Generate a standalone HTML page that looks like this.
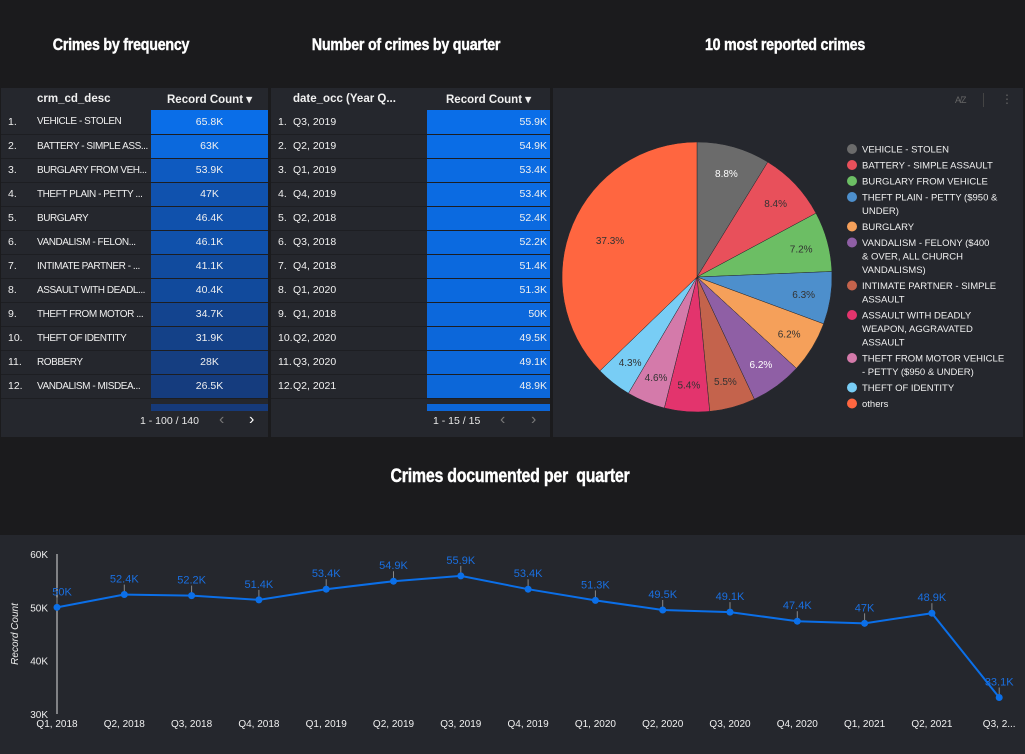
<!DOCTYPE html>
<html><head><meta charset="utf-8"><style>
*{margin:0;padding:0;box-sizing:border-box}
body{width:1025px;height:754px;background:#1b1b1d;font-family:"Liberation Sans",sans-serif;color:#e8e8e8;position:relative;overflow:hidden}
.t{position:absolute;font-weight:bold;color:#fff;font-size:17px;white-space:nowrap;transform:translateX(-50%) scaleX(0.84);letter-spacing:-0.3px;-webkit-text-stroke:0.4px #fff}
.panel{position:absolute;background:#25272d}
table{border-collapse:collapse;width:100%;font-size:10.5px;color:#f0f0f0;table-layout:fixed}
td,th{height:24px;padding:0;border-bottom:1px solid #1d1e22;white-space:nowrap;overflow:hidden}
th{height:22px;font-weight:bold;font-size:11.5px;border-bottom:none;text-align:left}
.n{padding-left:7px}
.c{text-align:center}
.r{text-align:right;padding-right:3px}
.d td:nth-child(2){font-size:10px;letter-spacing:-0.45px}
.foot{position:absolute;bottom:0;left:0;right:0;height:32px;font-size:10.5px}
</style></head><body>
<div class="t" style="left:121px;top:35px">Crimes by frequency</div>
<div class="t" style="left:406px;top:35px">Number of crimes by quarter</div>
<div class="t" style="left:785px;top:35px">10 most reported crimes</div>
<div class="t" style="left:510px;top:466px;font-size:19px">Crimes documented per&nbsp; quarter</div>

<div class="panel" style="left:1px;top:88px;width:267px;height:349px">
<table class="d">
<colgroup><col style="width:36px"><col style="width:114px"><col></colgroup>
<tr><th></th><th>crm_cd_desc</th><th class="c">Record Count ▾</th></tr>
<tr><td class="n">1.</td><td>VEHICLE - STOLEN</td><td class="c" style="background:#0a6ee8">65.8K</td></tr>
<tr><td class="n">2.</td><td>BATTERY - SIMPLE ASS...</td><td class="c" style="background:#0b69dd">63K</td></tr>
<tr><td class="n">3.</td><td>BURGLARY FROM VEH...</td><td class="c" style="background:#0e5ac0">53.9K</td></tr>
<tr><td class="n">4.</td><td>THEFT PLAIN - PETTY ...</td><td class="c" style="background:#1052ae">47K</td></tr>
<tr><td class="n">5.</td><td>BURGLARY</td><td class="c" style="background:#1051ac">46.4K</td></tr>
<tr><td class="n">6.</td><td>VANDALISM - FELON...</td><td class="c" style="background:#1051ab">46.1K</td></tr>
<tr><td class="n">7.</td><td>INTIMATE PARTNER - ...</td><td class="c" style="background:#114b9e">41.1K</td></tr>
<tr><td class="n">8.</td><td>ASSAULT WITH DEADL...</td><td class="c" style="background:#114a9c">40.4K</td></tr>
<tr><td class="n">9.</td><td>THEFT FROM MOTOR ...</td><td class="c" style="background:#13448f">34.7K</td></tr>
<tr><td class="n">10.</td><td>THEFT OF IDENTITY</td><td class="c" style="background:#144188">31.9K</td></tr>
<tr><td class="n">11.</td><td>ROBBERY</td><td class="c" style="background:#153e81">28K</td></tr>
<tr><td class="n">12.</td><td>VANDALISM - MISDEA...</td><td class="c" style="background:#153c7e">26.5K</td></tr>
</table>
<div style="position:absolute;left:150px;top:316px;width:117px;height:7px;background:#163a7a"></div>
<div class="foot"><span style="position:absolute;left:139px;top:10px">1 - 100 / 140</span><span style="position:absolute;left:218px;top:6px;color:#777;font-size:16px">‹</span><span style="position:absolute;left:248px;top:6px;color:#fff;font-size:16px">›</span></div>
</div>

<div class="panel" style="left:271px;top:88px;width:279px;height:349px">
<table>
<colgroup><col style="width:22px"><col style="width:134px"><col></colgroup>
<tr><th></th><th>date_occ (Year Q...</th><th class="c">Record Count ▾</th></tr>
<tr><td class="n">1.</td><td>Q3, 2019</td><td class="r" style="background:#0a6ee8">55.9K</td></tr>
<tr><td class="n">2.</td><td>Q2, 2019</td><td class="r" style="background:#0a6de6">54.9K</td></tr>
<tr><td class="n">3.</td><td>Q1, 2019</td><td class="r" style="background:#0b6be2">53.4K</td></tr>
<tr><td class="n">4.</td><td>Q4, 2019</td><td class="r" style="background:#0b6be2">53.4K</td></tr>
<tr><td class="n">5.</td><td>Q2, 2018</td><td class="r" style="background:#0b6ae0">52.4K</td></tr>
<tr><td class="n">6.</td><td>Q3, 2018</td><td class="r" style="background:#0b6ae0">52.2K</td></tr>
<tr><td class="n">7.</td><td>Q4, 2018</td><td class="r" style="background:#0b69de">51.4K</td></tr>
<tr><td class="n">8.</td><td>Q1, 2020</td><td class="r" style="background:#0b69de">51.3K</td></tr>
<tr><td class="n">9.</td><td>Q1, 2018</td><td class="r" style="background:#0c68dc">50K</td></tr>
<tr><td class="n">10.</td><td>Q2, 2020</td><td class="r" style="background:#0c67da">49.5K</td></tr>
<tr><td class="n">11.</td><td>Q3, 2020</td><td class="r" style="background:#0c67da">49.1K</td></tr>
<tr><td class="n">12.</td><td>Q2, 2021</td><td class="r" style="background:#0c67d9">48.9K</td></tr>
</table>
<div style="position:absolute;left:156px;top:316px;width:123px;height:7px;background:#0c66d8"></div>
<div class="foot"><span style="position:absolute;left:162px;top:10px">1 - 15 / 15</span><span style="position:absolute;left:229px;top:6px;color:#777;font-size:16px">‹</span><span style="position:absolute;left:260px;top:6px;color:#777;font-size:16px">›</span></div>
</div>

<div class="panel" style="left:553px;top:88px;width:470px;height:349px">
<div style="position:absolute;left:402px;top:7px;font-size:9px;color:#666">A̸Z</div>
<div style="position:absolute;left:430px;top:5px;width:1px;height:14px;background:#444"></div>
<div style="position:absolute;left:448px;top:4px;font-size:12px;color:#666">⋮</div>
</div>
<svg id="pie" style="position:absolute;left:0;top:0" width="1025" height="754"></svg>

<div class="panel" style="left:0;top:535px;width:1025px;height:219px"></div>
<svg id="line" style="position:absolute;left:0;top:0" width="1025" height="754"></svg>

<script>
var NS="http://www.w3.org/2000/svg";
function el(p,t,a,txt){var e=document.createElementNS(NS,t);for(var k in a)e.setAttribute(k,a[k]);if(txt!=null)e.textContent=txt;p.appendChild(e);return e;}
var pie=document.getElementById("pie");
var cx=697,cy=277,R=135;
var vals=[8.8,8.4,7.2,6.3,6.2,6.2,5.5,5.4,4.6,4.3,37.3];
var cols=["#6b6b6b","#e8505b","#6cbe64","#4d8fcc","#f5a05a","#8f5fa5","#c4634c","#e3346d","#d47aaa","#78cdf5","#ff6640"];
var lblc=["#fff","#333","#333","#333","#333","#fff","#333","#333","#333","#333","#333"];
var tot=vals.reduce(function(a,b){return a+b}),a0=-Math.PI/2;
vals.forEach(function(v,i){var a1=a0+v/tot*2*Math.PI;
var x0=cx+R*Math.cos(a0),y0=cy+R*Math.sin(a0),x1=cx+R*Math.cos(a1),y1=cy+R*Math.sin(a1);
el(pie,"path",{d:"M"+cx+","+cy+"L"+x0+","+y0+"A"+R+","+R+" 0 "+(a1-a0>Math.PI?1:0)+" 1 "+x1+","+y1+"Z",fill:cols[i],stroke:"#25272d","stroke-width":0.5});
var am=(a0+a1)/2,rr=i==10?R*0.7:R*0.8;
el(pie,"text",{x:cx+rr*Math.cos(am),y:cy+rr*Math.sin(am)+4,"text-anchor":"middle","font-size":"10","fill":lblc[i],"font-family":"Liberation Sans"},v+"%");
a0=a1;});
var leg=[["VEHICLE - STOLEN"],["BATTERY - SIMPLE ASSAULT"],["BURGLARY FROM VEHICLE"],["THEFT PLAIN - PETTY ($950 &","UNDER)"],["BURGLARY"],["VANDALISM - FELONY ($400","& OVER, ALL CHURCH","VANDALISMS)"],["INTIMATE PARTNER - SIMPLE","ASSAULT"],["ASSAULT WITH DEADLY","WEAPON, AGGRAVATED","ASSAULT"],["THEFT FROM MOTOR VEHICLE","- PETTY ($950 & UNDER)"],["THEFT OF IDENTITY"],["others"]];
var y=149;
leg.forEach(function(l,i){el(pie,"circle",{cx:852,cy:y,r:5,fill:cols[i]});
l.forEach(function(s,j){el(pie,"text",{x:862,y:y+3.5+j*13.5,"font-size":"9.5","fill":"#f0f0f0","font-family":"Liberation Sans"},s);});
y+=16+(l.length-1)*13.5;});

var ln=document.getElementById("line");
function Y(v){return 714-(v-30)*160/30}
[[60,"60K"],[50,"50K"],[40,"40K"],[30,"30K"]].forEach(function(t){el(ln,"text",{x:48,y:Y(t[0])+4,"text-anchor":"end","font-size":"10","fill":"#eee","font-family":"Liberation Sans"},t[1]);});
el(ln,"line",{x1:57,y1:554,x2:57,y2:714,stroke:"#ddd","stroke-width":1});
el(ln,"text",{x:0,y:0,transform:"translate(18,634) rotate(-90)","text-anchor":"middle","font-size":"10","font-style":"italic","fill":"#eee","font-family":"Liberation Sans"},"Record Count");
var vs=[50,52.4,52.2,51.4,53.4,54.9,55.9,53.4,51.3,49.5,49.1,47.4,47,48.9,33.1];
var lb=["50K","52.4K","52.2K","51.4K","53.4K","54.9K","55.9K","53.4K","51.3K","49.5K","49.1K","47.4K","47K","48.9K","33.1K"];
var xl=["Q1, 2018","Q2, 2018","Q3, 2018","Q4, 2018","Q1, 2019","Q2, 2019","Q3, 2019","Q4, 2019","Q1, 2020","Q2, 2020","Q3, 2020","Q4, 2020","Q1, 2021","Q2, 2021","Q3, 2..."];
var pts=vs.map(function(v,i){return [57+i*67.3,Y(v)]});
el(ln,"polyline",{points:pts.map(function(p){return p.join(",")}).join(" "),fill:"none",stroke:"#0b6fe8","stroke-width":2});
pts.forEach(function(p,i){
el(ln,"line",{x1:p[0],y1:p[1]-3,x2:p[0],y2:p[1]-10,stroke:"#888","stroke-width":1});
el(ln,"circle",{cx:p[0],cy:p[1],r:3.5,fill:"#0b6fe8"});
el(ln,"text",{x:p[0]+(i==0?5:0),y:p[1]-12,"text-anchor":"middle","font-size":"11","fill":"#1a6fe0","font-family":"Liberation Sans"},lb[i]);
el(ln,"text",{x:p[0],y:727,"text-anchor":"middle","font-size":"10","fill":"#f0f0f0","font-family":"Liberation Sans"},xl[i]);
});
</script>
</body></html>
